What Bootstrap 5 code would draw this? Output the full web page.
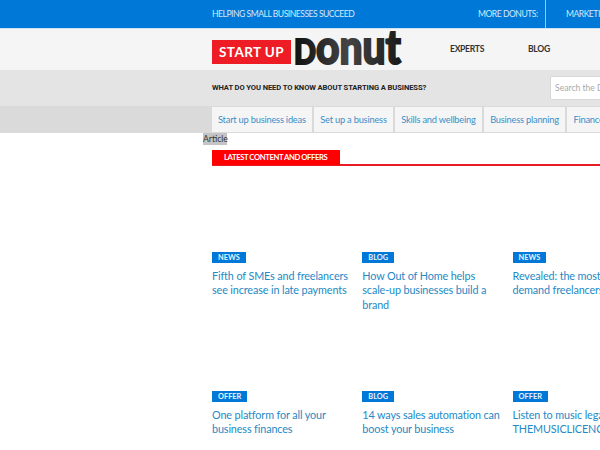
<!DOCTYPE html>
<html lang="en">
<head>
<meta charset="utf-8">
<title>Start Up Donut</title>
<link href="https://cdn.jsdelivr.net/npm/bootstrap@5.3.0/dist/css/bootstrap.min.css" rel="stylesheet">
<style>
html,body{overflow:hidden;height:450px;}
body{font-family:"Lato","Open Sans",sans-serif;background:#fff;width:600px;}
.shell{padding-left:212px;width:1100px;}
.topbar{background:#0078d7;height:29px;color:#d4e8f8;font-size:8.6px;letter-spacing:-.5px;border-bottom:1px solid #cfe3f3;}
.topbar .slogan{width:266px;}
.topbar .more{width:67px;}
.topbar .mkt{border-left:1px solid #9cc8ec;height:28px;padding-left:20px;}
.headbar{background:#f5f5f5;height:41px;}
.logo-red{background:#ee1c25;color:#fff;font-weight:700;font-size:13.5px;width:79px;height:24px;margin-top:11px;letter-spacing:.4px;}
.logo-svg{display:block;margin-left:2px;margin-top:2px;}
.logo-svg text{font-family:"Lato",sans-serif;font-weight:900;stroke:url(#dg);stroke-width:2px;fill:url(#dg);}
.mainlink{font-size:8.6px;letter-spacing:-.3px;font-weight:700;color:#333;text-decoration:none;}
.experts{margin-left:47px;width:78px;}
.askbar{background:#e4e4e4;height:36px;}
.askbar .ask{font-family:"Roboto",sans-serif;font-size:7.6px;letter-spacing:-.1px;font-weight:700;color:#222;width:338px;}
.searchbox{background:#fff;border:1px solid #d8d8d8;border-radius:2px;width:200px;height:24px;font-size:8.6px;color:#aaa;padding-left:4px;}
.navband{background:#dadada;height:27px;}
.tabitem{background:#f5f5f5;color:#3a8fc7;font-size:9.3px;letter-spacing:-.22px;height:25px;padding:0 6px;text-decoration:none;margin-top:1px;margin-right:2.5px;}
.artlabel{background:#c4c4c4;color:#333;font-size:8.6px;line-height:12px;margin-left:203px;width:24px;display:block;}
.headline-row{margin:5px 0 0 212px;border-bottom:2px solid #e81c24;width:900px;height:16px;}
.headline-tag{background:#fe0000;color:#fff;font-size:7.7px;letter-spacing:-.42px;font-weight:700;width:128px;height:15px;padding-left:12px;line-height:15px;}
.cardgrid{display:grid;grid-template-columns:repeat(3,150.3px);padding-left:212px;width:900px;}
.tile{height:139px;padding-top:86px;padding-right:10px;}
.tag{background:#0078d7;color:#e8f3fc;font-size:7.4px;font-weight:700;line-height:11px;height:11px;padding:0 6px;}
.tile-title{font-size:10.8px;letter-spacing:-.12px;line-height:14.7px;color:#2489c5;margin-top:5.5px;text-decoration:none;display:block;}
</style>
</head>
<body>
<div class="topbar"><div class="shell d-flex align-items-center h-100">
<span class="slogan text-nowrap">HELPING SMALL BUSINESSES SUCCEED</span>
<span class="more text-nowrap">MORE DONUTS:</span>
<span class="mkt d-flex align-items-center text-nowrap">MARKETING</span>
</div></div>
<div class="headbar"><div class="shell d-flex align-items-start h-100">
<div class="logo-red d-flex align-items-center justify-content-center text-nowrap">START UP</div>
<svg class="logo-svg" width="110" height="38" viewBox="0 0 110 38" role="img" aria-label="Donut">
<defs><linearGradient id="dg" x1="0" x2="1" y1="0" y2="0"><stop offset="0" stop-color="#111"/><stop offset=".5" stop-color="#444"/><stop offset="1" stop-color="#1a1a1a"/></linearGradient></defs>
<text x="1" y="33" textLength="107" lengthAdjust="spacingAndGlyphs"><tspan font-size="34">D</tspan><tspan font-size="48">onut</tspan></text>
</svg>
<div class="d-flex align-items-center h-100 experts"><a class="mainlink" href="#">EXPERTS</a></div>
<div class="d-flex align-items-center h-100"><a class="mainlink" href="#">BLOG</a></div>
</div></div>
<div class="askbar"><div class="shell d-flex align-items-center h-100">
<div class="ask text-nowrap">WHAT DO YOU NEED TO KNOW ABOUT STARTING A BUSINESS?</div>
<div class="searchbox d-flex align-items-center">Search the Donut</div>
</div></div>
<div class="navband"><div class="shell d-flex">
<a class="tabitem d-flex align-items-center text-nowrap" href="#">Start up business ideas</a>
<a class="tabitem d-flex align-items-center text-nowrap" href="#">Set up a business</a>
<a class="tabitem d-flex align-items-center text-nowrap" href="#">Skills and wellbeing</a>
<a class="tabitem d-flex align-items-center text-nowrap" href="#">Business planning</a>
<a class="tabitem d-flex align-items-center text-nowrap" href="#">Finance</a>
</div></div>
<span class="artlabel">Article</span>
<div class="headline-row"><div class="headline-tag text-nowrap">LATEST CONTENT AND OFFERS</div></div>
<div class="cardgrid">
<div class="tile d-flex flex-column align-items-start"><span class="tag">NEWS</span><a class="tile-title" href="#">Fifth of SMEs and freelancers see increase in late payments</a></div>
<div class="tile d-flex flex-column align-items-start"><span class="tag">BLOG</span><a class="tile-title" href="#">How Out of Home helps scale-up businesses build a brand</a></div>
<div class="tile d-flex flex-column align-items-start"><span class="tag">NEWS</span><a class="tile-title" href="#">Revealed: the most in<br>demand freelancers</a></div>
<div class="tile d-flex flex-column align-items-start"><span class="tag">OFFER</span><a class="tile-title" href="#">One platform for all your business finances</a></div>
<div class="tile d-flex flex-column align-items-start"><span class="tag">BLOG</span><a class="tile-title" href="#">14 ways sales automation can boost your business</a></div>
<div class="tile d-flex flex-column align-items-start"><span class="tag">OFFER</span><a class="tile-title" href="#">Listen to music legally with THEMUSICLICENCE</a></div>
</div>
<script src="https://cdn.jsdelivr.net/npm/bootstrap@5.3.0/dist/js/bootstrap.bundle.min.js"></script>
</body>
</html>
